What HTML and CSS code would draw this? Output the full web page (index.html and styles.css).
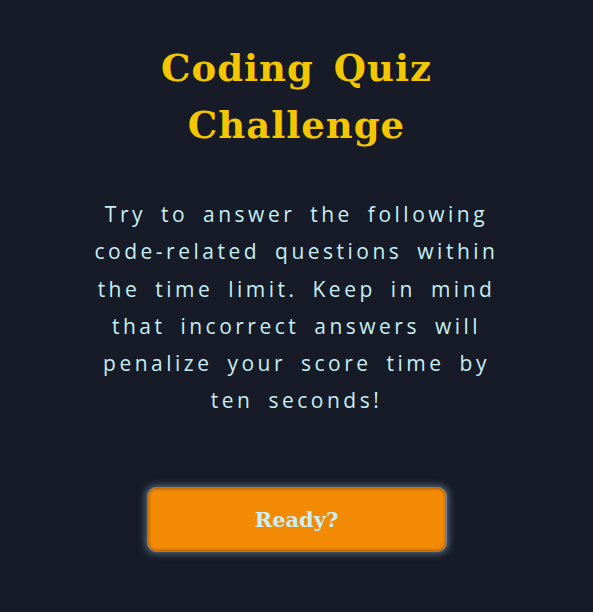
FILE: index.html
```
<!DOCTYPE html>
<html lang="en">
<head>
<meta charset="utf-8">
<title>Coding Quiz Challenge</title>
<link rel="stylesheet" href="styles.css">
</head>
<body>
<main class="intro">
  <h1 class="title">Coding Quiz Challenge</h1>
  <p class="desc">Try to answer the following code-related questions within the time limit. Keep in mind that incorrect answers will penalize your score time by ten seconds!</p>
  <button class="ready" type="button">Ready?</button>
</main>
</body>
</html>
```
FILE: styles.css
```
html, body {
  margin: 0;
  padding: 0;
  background: #161b27;
  height: 100%;
}
.intro {
  display: flex;
  flex-direction: column;
  align-items: center;
  padding-top: 40px;
}
.title {
  margin: 0;
  width: 300px;
  text-align: center;
  font-family: "DejaVu Serif", serif;
  font-weight: bold;
  font-size: 37px;
  line-height: 57px;
  letter-spacing: 1px;
  word-spacing: 6px;
  color: #f2c600;
}
.desc {
  margin: 42px 0 0;
  width: 430px;
  text-align: center;
  font-family: "Open Sans", sans-serif;
  font-size: 21px;
  line-height: 37.3px;
  letter-spacing: 3.5px;
  word-spacing: 6px;
  color: #c6eef4;
}
.ready {
  margin-top: 67px;
  width: 300px;
  height: 65px;
  border: 1px solid #6d8494;
  border-radius: 9px;
  background: #f28a06;
  color: #c9eef4;
  font-family: "DejaVu Serif", serif;
  font-weight: bold;
  font-size: 21px;
  box-shadow: 0 0 7px 2px rgba(130, 160, 180, 0.55), inset 0 0 3px 1px rgba(150, 75, 0, 0.7);
  cursor: pointer;
}
```
